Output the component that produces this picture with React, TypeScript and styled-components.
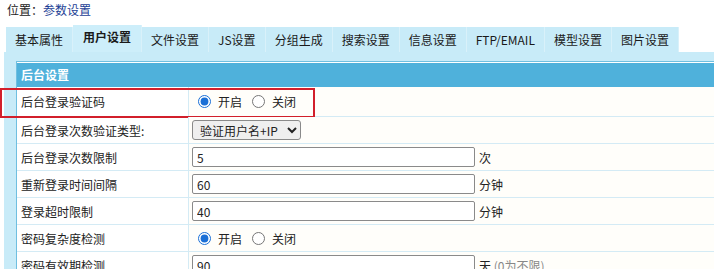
import React from 'react';
import styled, {createGlobalStyle} from 'styled-components';

const GlobalStyle = createGlobalStyle`
  html, body {
    margin: 0;
    padding: 0;
    background: #ffffff;
    overflow: hidden;
  }
  body {
    font-family: "Noto Sans CJK SC", "Noto Sans", sans-serif;
    font-size: 12px;
    color: #222;
  }
`;

const Page = styled.div`
  width: 714px;
  height: 269px;
  padding-left: 4px;
  box-sizing: border-box;
  overflow: hidden;
`;

const Location = styled.div`
  height: 25px;
  line-height: 19px;
  padding-left: 3px;
  color: #222;
`;

const LocationLink = styled.span`
  color: #1d3f96;
`;

const TabBar = styled.div`
  display: flex;
  align-items: flex-end;
  height: 27px;
  margin-left: 2px;
`;

const Tab = styled.div<{$active?: boolean}>`
  height: ${({$active}) => ($active ? '27px' : '25px')};
  line-height: ${({$active}) => ($active ? '23px' : '25px')};
  padding: 0 ${({$active}) => ($active ? '10px' : '9px')};
  background: ${({$active}) => ($active ? '#cdeefa' : '#c8ebf8')};
  border-right: 1px solid #d9f1fa;
  font-weight: ${({$active}) => ($active ? 700 : 400)};
  color: #1a1a1a;
  white-space: nowrap;
  cursor: pointer;
`;

const Panel = styled.div`
  background: #c8ebf8;
  padding: 9px 0 0 12px;
  height: 220px;
`;

const Box = styled.div`
  background: #ffffff;
  border: 1px solid #6fbfe0;
  border-right: none;
  padding-top: 1px;
  height: 100%;
`;

const Header = styled.div`
  height: 24px;
  line-height: 24px;
  background: #4fb1db;
  color: #ffffff;
  font-weight: 700;
  padding-left: 4px;
`;

const Row = styled.div<{$tall?: boolean}>`
  position: relative;
  display: grid;
  grid-template-columns: 172px 1fr;
  height: ${({$tall}) => ($tall ? '29px' : '26px')};
  border-bottom: 1px solid #d4ebf5;
`;

const Label = styled.div`
  display: flex;
  align-items: center;
  padding-left: 4px;
  border-right: 1px solid #d4ebf5;
  color: #222;
`;

const Value = styled.div`
  display: flex;
  align-items: center;
  padding-left: 3px;
  background: #fffefa;
`;

const RadioLabel = styled.label`
  display: inline-flex;
  align-items: center;
  margin-right: 4px;
  color: #222;
`;

const Radio = styled.input.attrs({type: 'radio'})`
  width: 13px;
  height: 13px;
  margin: 0 7px 0 6px;
  accent-color: #1a6fd6;
`;

const Select = styled.select`
  width: 109px;
  height: 20px;
  padding: 0 2px 0 3px;
  font-family: inherit;
  font-size: 12px;
  color: #222;
  background: #efefef;
  border: 1px solid #8a8a8a;
  border-radius: 3px;
`;

const TextInput = styled.input.attrs({type: 'text'})`
  width: 283px;
  height: 20px;
  box-sizing: border-box;
  padding: 0 4px;
  font-family: inherit;
  font-size: 12px;
  color: #222;
  border: 1px solid #8a8a8a;
  border-radius: 2px;
  outline: none;
`;

const Unit = styled.span`
  margin-left: 4px;
  color: #222;
`;

const Hint = styled.span`
  color: #888;
`;

const Highlight = styled.div`
  position: absolute;
  left: -17px;
  top: 1px;
  width: 315px;
  height: 30px;
  box-sizing: border-box;
  border: 2px solid #d21f2b;
  pointer-events: none;
`;

const tabs = ['基本属性', '用户设置', '文件设置', 'JS设置', '分组生成', '搜索设置', '信息设置', 'FTP/EMAIL', '模型设置', '图片设置'];

const OnOff = ({name}: {name: string}) => (
  <>
    <RadioLabel>
      <Radio name={name} defaultChecked />
      开启
    </RadioLabel>
    <RadioLabel>
      <Radio name={name} />
      关闭
    </RadioLabel>
  </>
);

const NumberField = ({value, unit}: {value: string; unit: React.ReactNode}) => (
  <>
    <TextInput defaultValue={value} />
    <Unit>{unit}</Unit>
  </>
);

export default function App() {
  return (
    <Page>
      <GlobalStyle />
      <Location>
        位置：<LocationLink>参数设置</LocationLink>
      </Location>
      <TabBar>
        {tabs.map((t) => (
          <Tab key={t} $active={t === '用户设置'}>
            {t}
          </Tab>
        ))}
      </TabBar>
      <Panel>
        <Box>
          <Header>后台设置</Header>
          <Row $tall>
            <Label>后台登录验证码</Label>
            <Value>
              <OnOff name="captcha" />
            </Value>
            <Highlight />
          </Row>
          <Row>
            <Label>后台登录次数验证类型:</Label>
            <Value>
              <Select defaultValue="ip">
                <option value="ip">验证用户名+IP</option>
                <option value="name">验证用户名</option>
              </Select>
            </Value>
          </Row>
          <Row>
            <Label>后台登录次数限制</Label>
            <Value>
              <NumberField value="5" unit="次" />
            </Value>
          </Row>
          <Row>
            <Label>重新登录时间间隔</Label>
            <Value>
              <NumberField value="60" unit="分钟" />
            </Value>
          </Row>
          <Row>
            <Label>登录超时限制</Label>
            <Value>
              <NumberField value="40" unit="分钟" />
            </Value>
          </Row>
          <Row>
            <Label>密码复杂度检测</Label>
            <Value>
              <OnOff name="complexity" />
            </Value>
          </Row>
          <Row>
            <Label>密码有效期检测</Label>
            <Value>
              <NumberField
                value="90"
                unit={
                  <>
                    天<Hint> (0为不限)</Hint>
                  </>
                }
              />
            </Value>
          </Row>
        </Box>
      </Panel>
    </Page>
  );
}
